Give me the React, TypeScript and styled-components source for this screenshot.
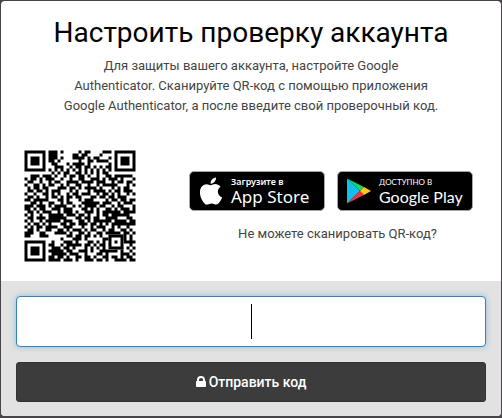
import React from 'react';
import styled, { createGlobalStyle } from 'styled-components';

const GlobalStyle = createGlobalStyle`
  *, *::before, *::after { box-sizing: border-box; }
  body {
    margin: 0;
    background: #474547;
    font-family: Roboto, 'Liberation Sans', sans-serif;
    font-size: 13px;
    line-height: 20px;
    color: #444;
  }
`;

const Dialog = styled.main`
  margin: 1px;
  background: #fff;
  border-radius: 4px;
  overflow: hidden;
`;

const Intro = styled.header`
  padding: 12px 12px 0;
  text-align: center;
`;

const Title = styled.h1`
  margin: 0 0 3px;
  font-size: 28px;
  line-height: 40px;
  font-weight: 400;
  color: #000;
`;

const Description = styled.p`
  margin: 0;
`;

const Setup = styled.section`
  display: grid;
  grid-template-columns: 112px 1fr;
  column-gap: 53px;
  padding: 34px 15px 19px 23px;
`;

const Downloads = styled.div`
  padding-top: 21px;
`;

const Badges = styled.div`
  display: flex;
  gap: 12px;
  margin-bottom: 13px;
`;

const Badge = styled.a`
  display: flex;
  align-items: center;
  width: 136px;
  height: 40px;
  padding-left: 9px;
  gap: 8px;
  border: 1px solid #a6a6a6;
  border-radius: 5px;
  background: #000;
  color: #fff;
  text-decoration: none;
  white-space: nowrap;

  svg {
    flex: none;
  }
`;

const BadgeText = styled.span`
  display: flex;
  flex-direction: column;
`;

const Store = styled.span<{ $google?: boolean }>`
  font-family: ${p => (p.$google ? 'Lato' : "'Noto Sans'")}, sans-serif;
  font-size: ${p => (p.$google ? 16 : 17)}px;
  line-height: 18px;
`;

const Caption = styled.span<{ $google?: boolean }>`
  font-family: ${p => (p.$google ? 'Lato' : "'Noto Sans'")}, sans-serif;
  font-size: ${p => (p.$google ? 8 : 9)}px;
  line-height: 12px;
  font-weight: ${p => (p.$google ? 400 : 600)};
`;

const Help = styled.a`
  display: block;
  text-align: center;
  color: #444;
  text-decoration: none;
`;

const Form = styled.form`
  display: flex;
  flex-direction: column;
  gap: 15px;
  padding: 15px 15px 14px;
  background: #e2e2e2;
`;

const Field = styled.label`
  position: relative;
  display: block;
`;

const CodeInput = styled.input`
  display: block;
  width: 100%;
  height: 51px;
  padding: 6px 12px;
  border: 1px solid #2e83c4;
  border-radius: 4px;
  outline: none;
  background: #fff;
  box-shadow: 0 0 6px rgba(46, 131, 196, 0.4);
  font-size: 30px;
  text-align: center;
  caret-color: transparent;
`;

const Caret = styled.span`
  position: absolute;
  top: 8px;
  bottom: 8px;
  left: 50%;
  width: 1px;
  background: #000;
  pointer-events: none;
`;

const Submit = styled.button`
  display: flex;
  align-items: center;
  justify-content: center;
  gap: 3px;
  height: 40px;
  border: 1px solid #333;
  border-radius: 3px;
  background: #3c3c3c;
  color: #fff;
  font-family: Roboto, 'Liberation Sans', sans-serif;
  font-size: 14px;
  font-weight: 500;
`;

const MODULES = [
  '1111111011101000001011000011100111111',
  '1000001011100000110110000100010100000',
  '1011101011101000111101011000100101110',
  '1011101011010000001001101111000101110',
  '1011101001100010111101000000100101110',
  '1000001000111001011011010101100100000',
  '1111111010101010101010101010100111111',
  '0000000001010110011010101011000000000',
  '0011101110100101101101001001101111110',
  '1011010111001001001100111010111010001',
  '0110010010110011110111101110010110110',
  '1001101011001010011001001011111000101',
  '0101101100011101101011110100010101100',
  '0110110101110001010001011110101101110',
  '1001001101010010110111001011010100101',
  '0110100101101011011000110110110111000',
  '1101111100011010001011100001011011011',
  '0011010011001011000111111011100101110',
  '1110111010111100101011110110010110001',
  '1101011001110111000110101001101011101',
  '0110101110010111010011101011111101111',
  '1010010011111011101101001011011111100',
  '0110111011111100011011011001111000110',
  '1010010111110111001101011111101111011',
  '0101101010001101101110110101011111111',
  '1010110111100111000100101110010100100',
  '0110100110011010111010110010110011010',
  '1110011000111101001101001101111101101',
  '1100011100000011011011010100111111010',
  '0000000000001000111010000011111111010',
  '1111111001000111010001101010001101111',
  '1000001011001011111011010110101100010',
  '1011101001110110100010101010001110101',
  '1011101011111011001110100111111010010',
  '1011101001111101110010001101000011101',
  '1000001011011010011011010011011010110',
  '1111111011110111010011101101001111011',
];

// Finder squares are drawn separately so the data rows only carry the code area.
const inFinder = (x: number, y: number) =>
  (x < 8 && y < 8) || (x > 28 && y < 8) || (x < 8 && y > 28);

function QrCode() {
  const data = MODULES
    .flatMap((row, y) =>
      [...row].map((cell, x) =>
        cell === '1' && !inFinder(x, y) ? `M${x * 3} ${y * 3}h3v3h-3z` : '',
      ),
    )
    .join('');
  const finder = (x: number, y: number) => (
    <g transform={`translate(${x * 3} ${y * 3})`}>
      <path fillRule="evenodd" d="M0 0h21v21H0zM3 3v15h15V3zM6 6h9v9H6z" />
    </g>
  );
  return (
    <svg width="112" height="112" viewBox="0 0 112 112" role="img" aria-label="QR-код">
      <g transform="translate(0.5 0.5)">
        <path d={data} />
        {finder(0, 0)}
        {finder(30, 0)}
        {finder(0, 30)}
        <path fill="#fff" d="M84 84h15v15H84z" />
        <path fillRule="evenodd" d="M84 84h15v15H84zM87 87v9h9v-9zM90 90h3v3h-3z" />
      </g>
    </svg>
  );
}

const AppleLogo = () => (
  <svg width="24" height="28" viewBox="3.2 2.800 18 22" fill="#fff" aria-hidden="true">
    <path d="M17.6 14.2c0-2.5 2-3.7 2.2-3.8-1.2-1.8-3.1-2-3.8-2-1.6-.2-3.1.9-3.9.9-.8 0-2.1-.9-3.4-.9C7 8.400 5.300 9.400 4.400 11c-1.900 3.300-.5 8.200 1.300 10.800.9 1.300 2 2.800 3.400 2.700 1.400-.1 1.900-.9 3.500-.9s2.100.9 3.500.9c1.500 0 2.400-1.300 3.300-2.600 1-1.500 1.500-3 1.500-3-.1-.1-3.300-1.200-3.300-4.700zM15 6.600c.7-.9 1.200-2.100 1.100-3.400-1.100.1-2.400.7-3.100 1.600-.7.800-1.300 2-1.100 3.200 1.200.1 2.400-.6 3.100-1.400z" />
  </svg>
);

const PlayLogo = () => (
  <svg width="24" height="26" viewBox="0 0 24 26" aria-hidden="true">
    <path fill="#12bfea" d="M0 0.500v25L13 13z" />
    <path fill="#10d574" d="M0 0.500 17 9l-4 4z" />
    <path fill="#ed3448" d="M0 25.500 17 17l-4-4z" />
    <path fill="#ffc915" d="M17 9 24 13l-7 4-4-4z" />
  </svg>
);

const LockIcon = () => (
  <svg width="10" height="12" viewBox="0 0 10 12" aria-hidden="true">
    <path fill="#fff" fillRule="evenodd" d="M1 5V4a4 4 0 0 1 8 0v1h.3q.7 0 .7.700v4.600q0 .7-.7.700H.7q-.7 0-.7-.7V5.700Q0 5 .7 5zm2 0h4V4a2 2 0 0 0-4 0z" />
  </svg>
);

export default function App() {
  return (
    <>
      <GlobalStyle />
      <Dialog>
        <Intro>
          <Title>Настроить проверку аккаунта</Title>
          <Description>
            Для защиты вашего аккаунта, настройте Google
            <br />
            Authenticator. Сканируйте QR-код с помощью приложения
            <br />
            Google Authenticator, а после введите свой проверочный код.
          </Description>
        </Intro>
        <Setup>
          <QrCode />
          <Downloads>
            <Badges>
              <Badge href="#app-store">
                <AppleLogo />
                <BadgeText>
                  <Caption>Загрузите в</Caption>
                  <Store>App Store</Store>
                </BadgeText>
              </Badge>
              <Badge href="#google-play">
                <PlayLogo />
                <BadgeText>
                  <Caption $google>ДОСТУПНО В</Caption>
                  <Store $google>Google Play</Store>
                </BadgeText>
              </Badge>
            </Badges>
            <Help href="#manual">Не можете сканировать QR-код?</Help>
          </Downloads>
        </Setup>
        <Form onSubmit={e => e.preventDefault()}>
          <Field>
            <CodeInput type="text" aria-label="Проверочный код" autoComplete="one-time-code" />
            <Caret />
          </Field>
          <Submit type="submit">
            <LockIcon />
            Отправить код
          </Submit>
        </Form>
      </Dialog>
    </>
  );
}
